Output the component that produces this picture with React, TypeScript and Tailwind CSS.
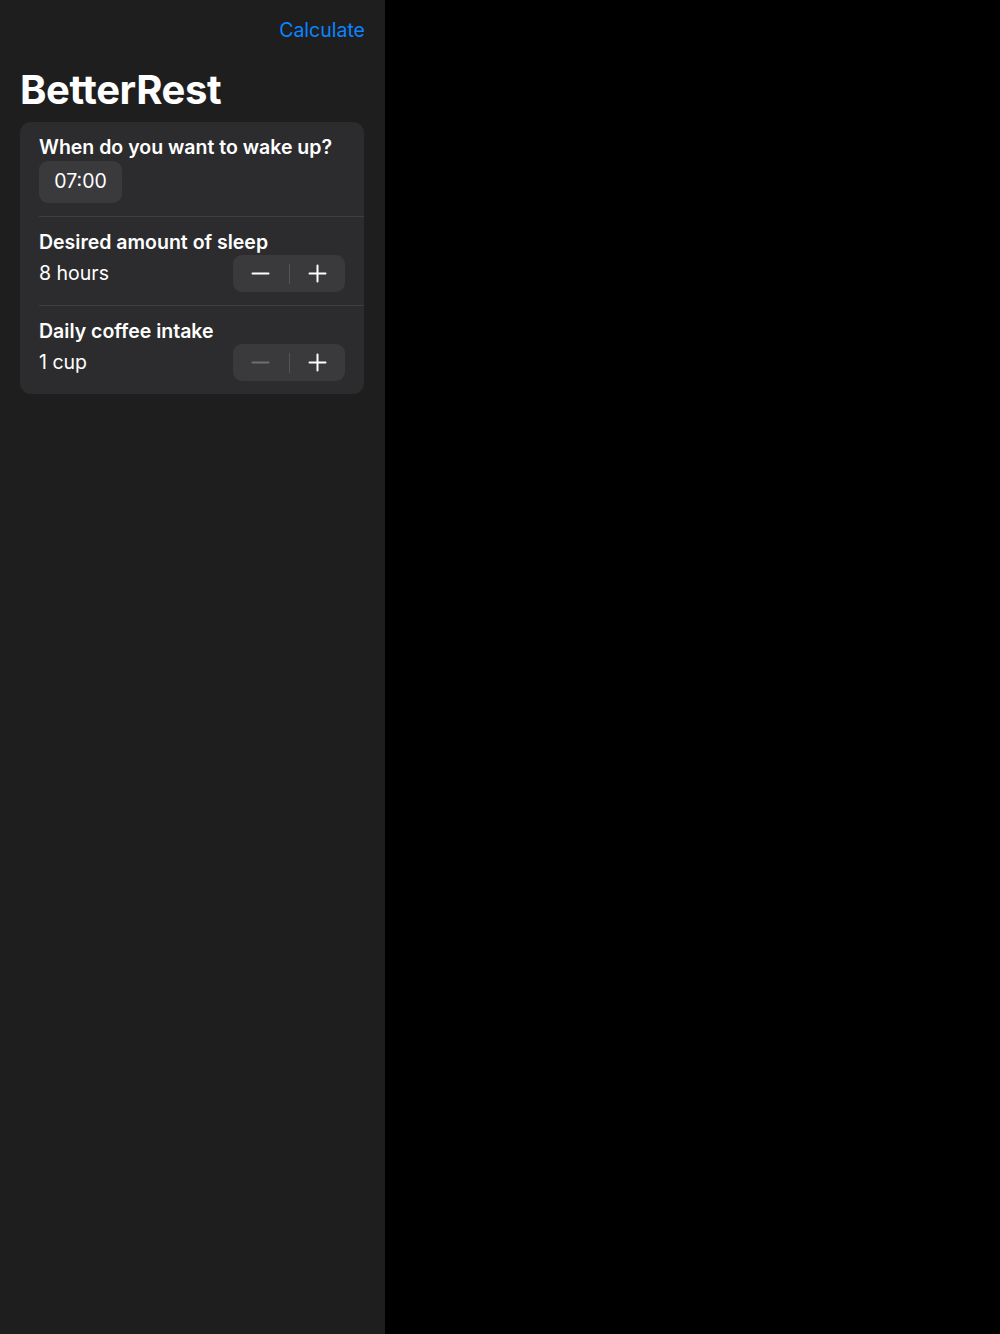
const font = { fontFamily: 'Inter, "Noto Sans", sans-serif' };

interface StepperProps {
  minusDisabled?: boolean;
}

const Stepper = ({ minusDisabled }: StepperProps) => (
  <div className="flex h-[37px] w-[112px] items-center rounded-[9px] bg-[#3a3a3c]">
    <div className="flex flex-1 items-center justify-center">
      <svg width="19" height="19" viewBox="0 0 19 19">
        <path
          d="M1.5 9.5h16"
          stroke={minusDisabled ? '#6e6e72' : '#ffffff'}
          strokeWidth="2"
          strokeLinecap="round"
        />
      </svg>
    </div>
    <div className="h-[20px] w-px bg-[#545458]" />
    <div className="flex flex-1 items-center justify-center">
      <svg width="19" height="19" viewBox="0 0 19 19">
        <path
          d="M1.5 9.5h16M9.5 1.5v16"
          stroke="#ffffff"
          strokeWidth="2"
          strokeLinecap="round"
        />
      </svg>
    </div>
  </div>
);

interface StepRowProps {
  label: string;
  value: string;
  minusDisabled?: boolean;
}

const StepRow = ({ label, value, minusDisabled }: StepRowProps) => (
  <div className="flex flex-col pt-[13px] pb-[13px] pr-[19px]">
    <p className="text-[19.5px] leading-[25px] font-semibold text-white">
      {label}
    </p>
    <div className="flex items-center justify-between">
      <span className="text-[19.5px] leading-[25px] text-white">{value}</span>
      <Stepper minusDisabled={minusDisabled} />
    </div>
  </div>
);

export default function App() {
  return (
    <div className="flex h-[1334px] w-full bg-black" style={font}>
      <aside className="flex h-full w-[385px] flex-col bg-[#1e1e1e] px-[20px]">
        <div className="flex justify-end pt-[18px]">
          <button className="text-[19.5px] leading-[25px] text-[#0a84ff]">
            Calculate
          </button>
        </div>
        <h1 className="mt-[23px] text-[40px] leading-[48px] font-bold tracking-[-0.01em] text-white">
          BetterRest
        </h1>

        <div className="mt-[8px] mr-[1px] flex flex-col rounded-[11px] bg-[#2c2c2e] pl-[19px]">
          <div className="flex flex-col items-start pt-[13px] pb-[13px]">
            <p className="text-[19.5px] leading-[25px] font-semibold text-white">
              When do you want to wake up?
            </p>
            <div className="mt-[1px] flex h-[42px] w-[83px] items-center justify-center rounded-[9px] bg-[#3a3a3c] text-[19.5px] text-white">
              07:00
            </div>
          </div>
          <div className="h-px bg-[#3f3f42]" />
          <StepRow label="Desired amount of sleep" value="8 hours" />
          <div className="h-px bg-[#3f3f42]" />
          <StepRow label="Daily coffee intake" value="1 cup" minusDisabled />
        </div>
      </aside>
      <main className="flex-1 bg-black" />
    </div>
  );
}
